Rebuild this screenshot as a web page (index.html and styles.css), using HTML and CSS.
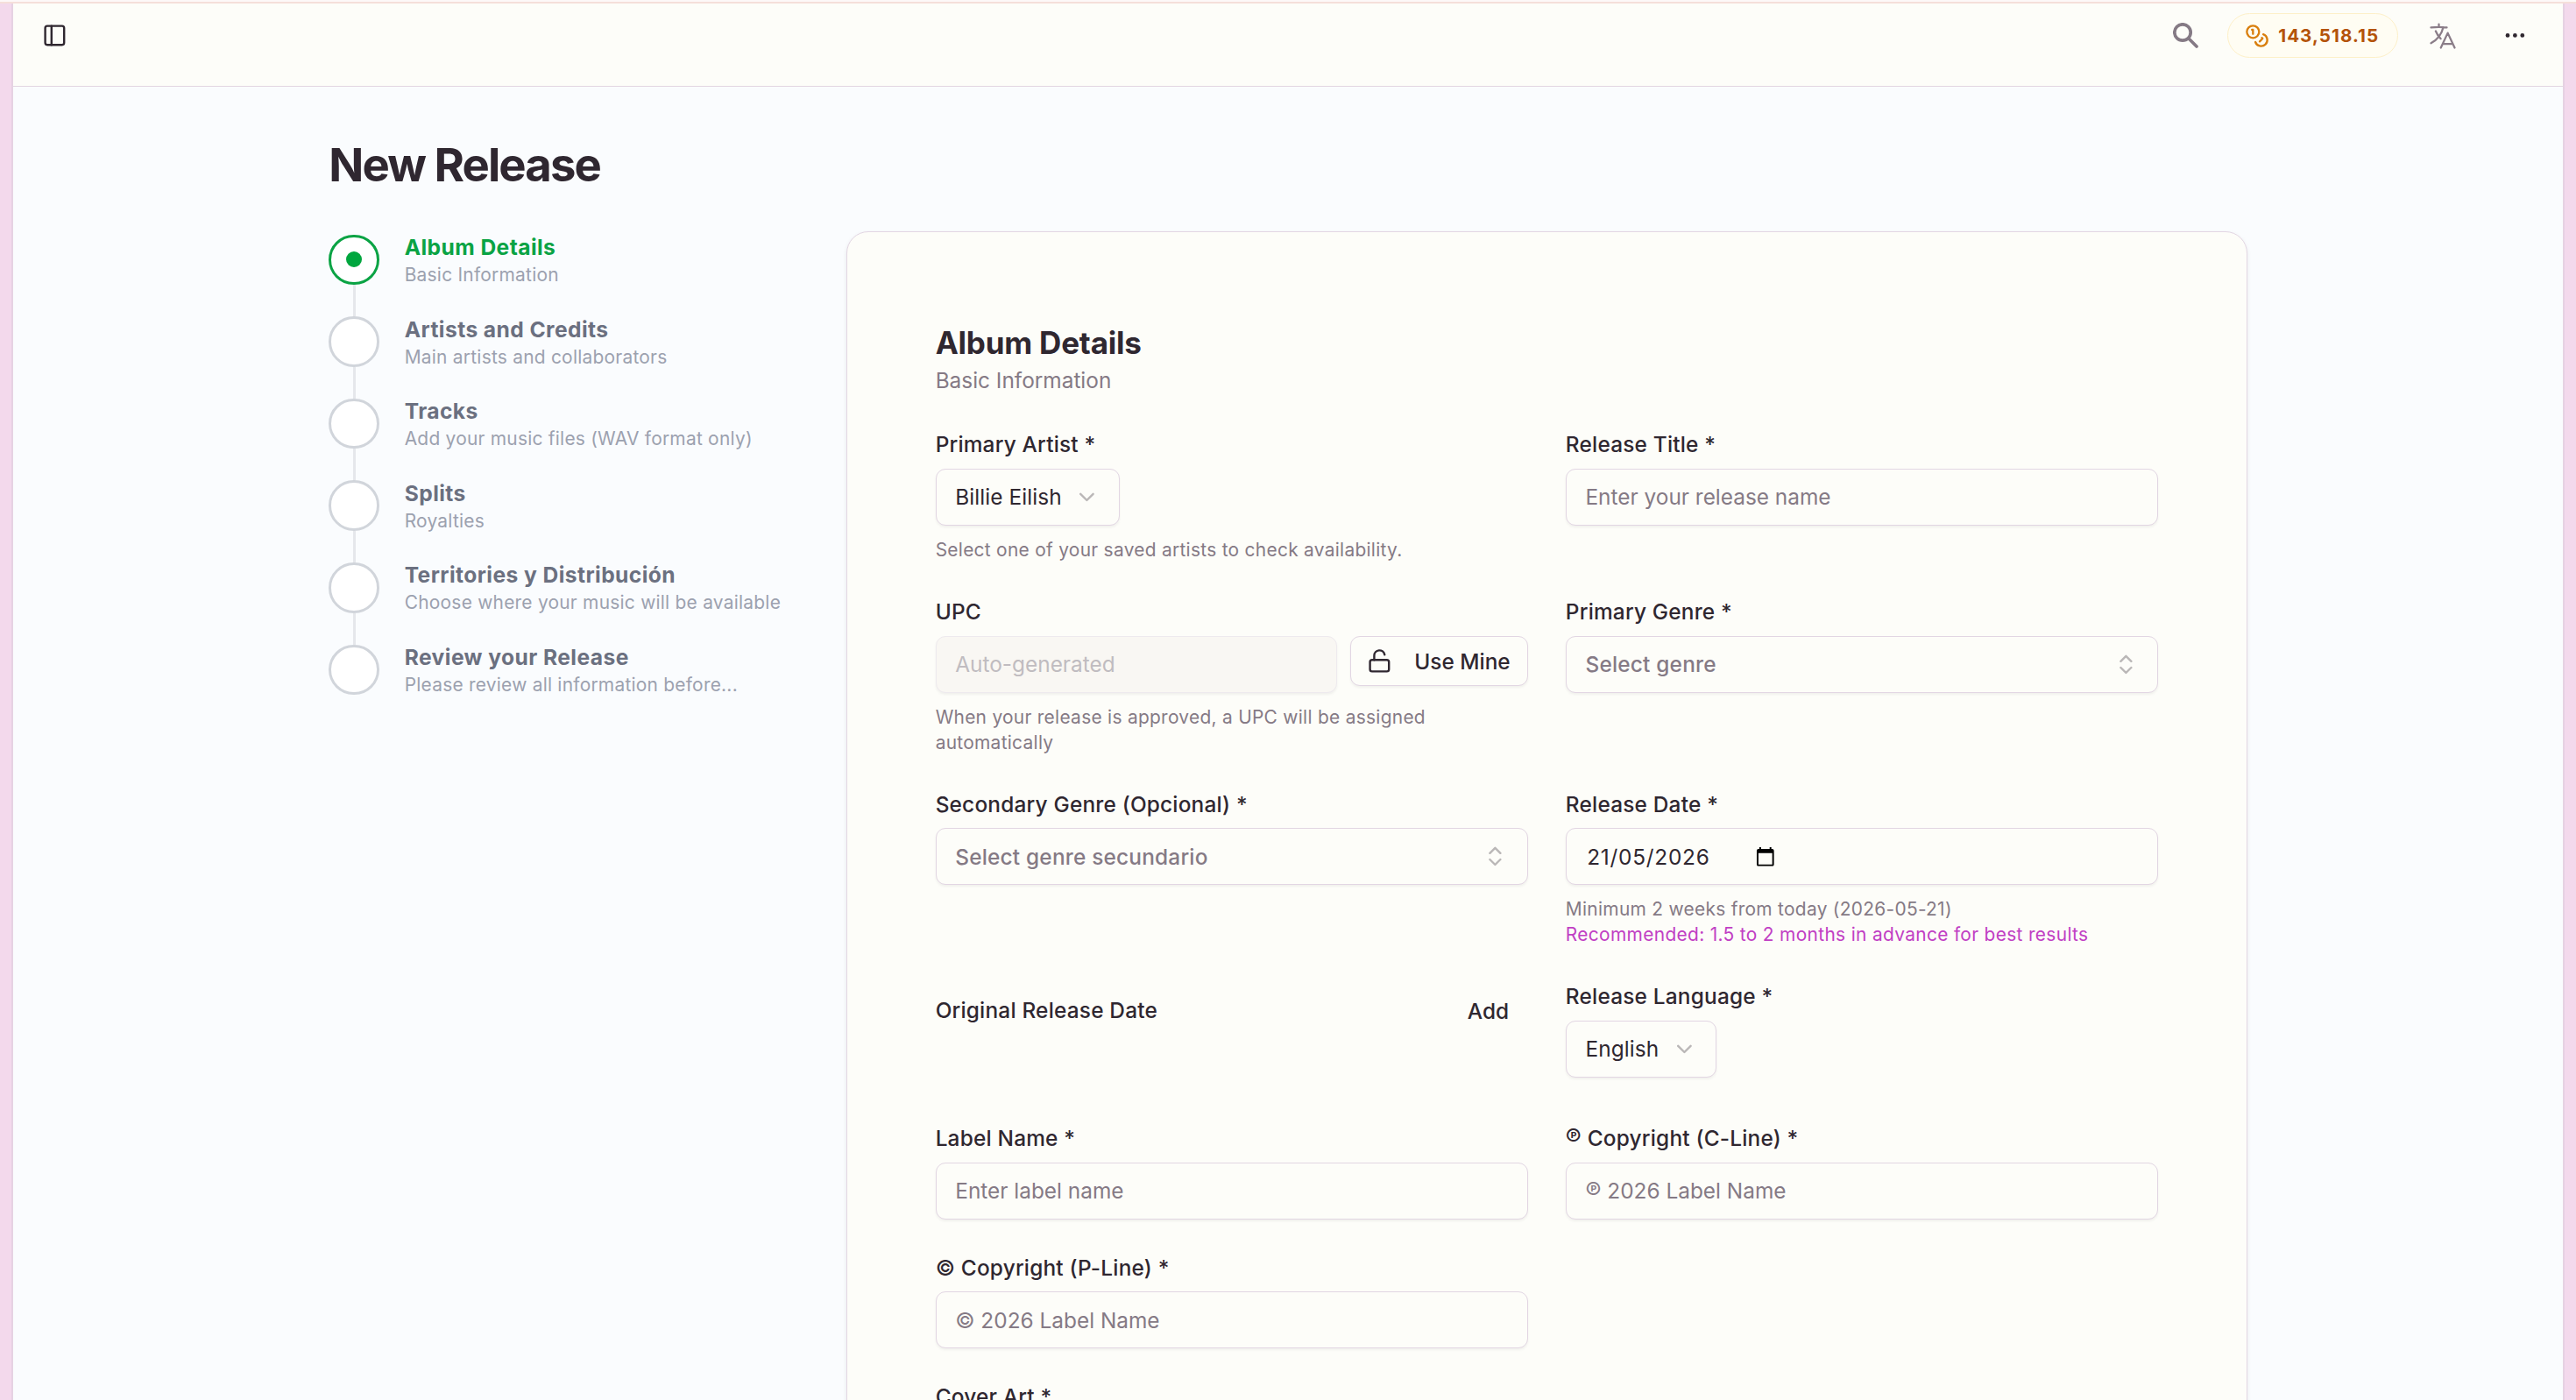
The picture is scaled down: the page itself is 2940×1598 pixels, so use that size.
FILE: index.html
```html
<!DOCTYPE html>
<html lang="en">

<head>
    <meta charset="utf-8">
    <meta name="viewport" content="width=device-width, initial-scale=1.0">
    <title>New Release</title>
    <link rel="stylesheet" href="styles.css">
</head>

<body>
    <div class="shell">
        <header class="topbar">
            <svg class="icon dark" viewBox="0 0 24 24"><rect x="3" y="3" width="18" height="18" rx="2"/><path d="M9 3v18"/></svg>
            <div class="topbar-right">
                <svg class="search" viewBox="0 0 29 29"><circle cx="11" cy="11" r="9.2"/><path d="M18 18l9 9"/></svg>
                <div class="balance">
                    <svg class="coins" viewBox="0 0 24 24"><circle cx="8" cy="8" r="6"/><path d="M18.09 10.37A6 6 0 1 1 10.34 18"/><path d="M7 6h1v4"/><path d="m16.71 13.88.7.71-2.82 2.82"/></svg>
                    <span>143,518.15</span>
                </div>
                <svg class="language" viewBox="0 0 24 24"><path d="m10.5 21 5.25-11.25L21 21m-9-3h7.5M3 5.621a48.474 48.474 0 0 1 6-.371m0 0c1.12 0 2.233.038 3.334.114M9 5.25V3m3.334 2.364C11.176 10.658 7.69 15.08 3 17.502m9.334-12.138c.896.061 1.785.147 2.666.257m-4.589 8.495a18.023 18.023 0 0 1-3.827-5.802"/></svg>
                <svg class="icon dark" viewBox="0 0 24 24"><circle cx="12" cy="12" r="1"/><circle cx="19" cy="12" r="1"/><circle cx="5" cy="12" r="1"/></svg>
            </div>
        </header>

        <main class="page">
            <h1>New Release</h1>
            <div class="columns">
                <ol class="steps">
                    <li class="step active">
                        <span class="dot"></span>
                        <div>
                            <div class="step-title">Album Details</div>
                            <div class="step-text">Basic Information</div>
                        </div>
                    </li>
                    <li class="step">
                        <span class="dot"></span>
                        <div>
                            <div class="step-title">Artists and Credits</div>
                            <div class="step-text">Main artists and collaborators</div>
                        </div>
                    </li>
                    <li class="step">
                        <span class="dot"></span>
                        <div>
                            <div class="step-title">Tracks</div>
                            <div class="step-text">Add your music files (WAV format only)</div>
                        </div>
                    </li>
                    <li class="step">
                        <span class="dot"></span>
                        <div>
                            <div class="step-title">Splits</div>
                            <div class="step-text">Royalties</div>
                        </div>
                    </li>
                    <li class="step">
                        <span class="dot"></span>
                        <div>
                            <div class="step-title">Territories y Distribución</div>
                            <div class="step-text">Choose where your music will be available</div>
                        </div>
                    </li>
                    <li class="step">
                        <span class="dot"></span>
                        <div>
                            <div class="step-title">Review your Release</div>
                            <div class="step-text">Please review all information before...</div>
                        </div>
                    </li>
                </ol>

                <section class="card">
                    <h2>Album Details</h2>
                    <p class="subtitle">Basic Information</p>

                    <form class="fields">
                        <div class="field">
                            <label>Primary Artist *</label>
                            <div class="control select">
                                <span>Billie Eilish</span>
                                <svg class="icon faded" viewBox="0 0 24 24"><path d="m6 9 6 6 6-6"/></svg>
                            </div>
                            <p class="help">Select one of your saved artists to check availability.</p>
                        </div>
                        <div class="field">
                            <label for="title">Release Title *</label>
                            <input class="control" id="title" type="text" placeholder="Enter your release name">
                        </div>

                        <div class="field">
                            <label for="upc">UPC</label>
                            <div class="upc">
                                <input class="control" id="upc" type="text" placeholder="Auto-generated" disabled>
                                <button class="use-mine" type="button">
                                    <svg class="icon" viewBox="0 0 24 24"><rect x="3" y="11" width="18" height="11" rx="2"/><path d="M7 11V7a5 5 0 0 1 9.9-1"/></svg>
                                    <span>Use Mine</span>
                                </button>
                            </div>
                            <p class="help">When your release is approved, a UPC will be assigned automatically</p>
                        </div>
                        <div class="field">
                            <label>Primary Genre *</label>
                            <div class="control combo">
                                <span>Select genre</span>
                                <svg class="icon faded" viewBox="0 0 24 24"><path d="m7 15 5 5 5-5"/><path d="m7 9 5-5 5 5"/></svg>
                            </div>
                        </div>

                        <div class="field">
                            <label>Secondary Genre (Opcional) *</label>
                            <div class="control combo">
                                <span>Select genre secundario</span>
                                <svg class="icon faded" viewBox="0 0 24 24"><path d="m7 15 5 5 5-5"/><path d="m7 9 5-5 5 5"/></svg>
                            </div>
                        </div>
                        <div class="field">
                            <label>Release Date *</label>
                            <div class="control date">
                                <span>21/05/2026</span>
                                <svg class="calendar" viewBox="0 0 24 24"><path d="M20 3h-1V1h-2v2H7V1H5v2H4c-1.1 0-2 .9-2 2v16c0 1.1.9 2 2 2h16c1.1 0 2-.9 2-2V5c0-1.1-.9-2-2-2zm0 18H4V8h16v13z"/></svg>
                            </div>
                            <p class="help">Minimum 2 weeks from today (2026-05-21)<br><span class="tip">Recommended: 1.5 to 2 months in advance for best results</span></p>
                        </div>

                        <div class="original-date">
                            <label>Original Release Date</label>
                            <button class="add" type="button">Add</button>
                        </div>
                        <div class="field language-field">
                            <label>Release Language *</label>
                            <div class="control select">
                                <span>English</span>
                                <svg class="icon faded" viewBox="0 0 24 24"><path d="m6 9 6 6 6-6"/></svg>
                            </div>
                        </div>

                        <div class="field">
                            <label for="label">Label Name *</label>
                            <input class="control" id="label" type="text" placeholder="Enter label name">
                        </div>
                        <div class="field">
                            <label><span class="phono">℗</span> Copyright (C-Line) *</label>
                            <div class="control hint"><span class="phono">℗</span>&nbsp;2026 Label Name</div>
                        </div>

                        <div class="field">
                            <label for="pline">© Copyright (P-Line) *</label>
                            <input class="control" id="pline" type="text" placeholder="© 2026 Label Name">
                        </div>
                        <div class="field"></div>

                        <div class="field">
                            <label>Cover Art *</label>
                        </div>
                    </form>
                </section>
            </div>
        </main>
    </div>
</body>

</html>
```

FILE: styles.css
```css
* {
    box-sizing: border-box;
    margin: 0;
    padding: 0;
}

html {
    font-size: 28.8px;
    font-family: Inter, "Liberation Sans", sans-serif;
    color: #2f2730;
}

body {
    height: 100vh;
    overflow: hidden;
    background: #f3d9ec;
    border-top: 2px solid #fdf8f8;
}

input,
button {
    font-family: inherit;
    color: inherit;
}

.shell {
    height: 100%;
    overflow: hidden;
    border-top: 2px solid #f5dfda;
    padding: 0 13px;
    background: #f3d9ec;
}

.topbar,
.page {
    border-left: 2px solid #e6d2e3;
    border-right: 2px solid #e6d2e3;
}

.topbar {
    height: 95px;
    display: flex;
    align-items: center;
    justify-content: space-between;
    padding: 0 40px 21px 33px;
    background: #fdfdf9;
    border-bottom: 1px solid #e3d5e1;
}

.topbar-right {
    display: flex;
    align-items: center;
}

.icon {
    width: 1rem;
    height: 1rem;
    flex: none;
    fill: none;
    stroke: currentColor;
    stroke-width: 2;
    stroke-linecap: round;
    stroke-linejoin: round;
}

.faded {
    opacity: .32;
}

.search {
    width: 29px;
    height: 29px;
    margin-right: 33px;
    fill: none;
    stroke: #857a85;
    stroke-width: 3.7;
    stroke-linecap: round;
}

.balance {
    width: 195px;
    height: 51px;
    display: flex;
    align-items: center;
    padding-left: 19px;
    margin-right: 33px;
    border: 1px solid #fdf0c8;
    border-radius: 26px;
    background: #fffdf3;
    color: #b45309;
    font-size: 20.6px;
    font-weight: 700;
    letter-spacing: 1.05px;
}

.coins {
    width: 28px;
    height: 28px;
    margin-right: 10px;
    fill: none;
    stroke: #d97f0e;
    stroke-width: 2;
    stroke-linecap: round;
    stroke-linejoin: round;
}

.language {
    width: 36px;
    height: 36px;
    margin-right: 50px;
    fill: none;
    stroke: #8a7d88;
    stroke-width: 1.5;
    stroke-linecap: round;
    stroke-linejoin: round;
}

.page {
    height: 1499px;
    padding: 57px 360.3px 0;
    background: #fafcfe;
}

h1 {
    font-size: 52.6px;
    line-height: 64.8px;
    letter-spacing: -1.9px;
    font-weight: 700;
    margin-bottom: 1.5rem;
}

.columns {
    display: flex;
    gap: 1.5rem;
}

/* steps */

.steps {
    width: 25%;
    flex: none;
    display: flex;
    flex-direction: column;
    gap: 1rem;
    list-style: none;
}

.step {
    position: relative;
    height: 64.8px;
    display: flex;
    align-items: center;
    gap: 1rem;
    color: #6b7080;
}

.dot {
    width: 2rem;
    height: 2rem;
    flex: none;
    display: flex;
    align-items: center;
    justify-content: center;
    border: 3px solid #d1d5db;
    border-radius: 50%;
    background: #fff;
}

/* line down to the next step */
.step:not(:last-child)::after {
    content: "";
    position: absolute;
    left: 27.3px;
    top: 61.2px;
    width: 3px;
    height: 36px;
    background: #e5e7eb;
}

.active .dot {
    border-color: #0aa344;
}

.active .dot::before {
    content: "";
    width: 18px;
    height: 18px;
    border-radius: 50%;
    background: #00a63e;
}

.step-title {
    font-size: 24.6px;
    line-height: 36px;
    font-weight: 650;
    letter-spacing: .43px;
}

.active .step-title {
    color: #0aa344;
}

.step-text {
    font-size: 20.9px;
    line-height: 28.8px;
    letter-spacing: .25px;
    color: #9ca1af;
    white-space: nowrap;
}

/* card */

.card {
    flex: 1;
    height: 1600px;
    padding: 3.5rem;
    border: 1px solid #e2d6e3;
    border-radius: 25px;
    background: #fdfdf9;
    box-shadow: 0 2px 5px rgba(0, 0, 0, .08);
}

h2 {
    font-size: 35px;
    line-height: 50.4px;
    font-weight: 650;
    letter-spacing: -.2px;
}

.subtitle {
    font-size: 24.4px;
    line-height: 36px;
    color: #857a85;
    margin-bottom: 1.5rem;
}

.fields {
    display: grid;
    grid-template-columns: 1fr 1fr;
    gap: 1.5rem;
}

.field {
    display: flex;
    flex-direction: column;
    align-items: flex-start;
    gap: .5rem;
}

.language-field {
    padding-bottom: .5rem;
}

label {
    height: 25.2px;
    font-size: 24.4px;
    line-height: 25.2px;
    font-weight: 500;
    letter-spacing: .2px;
}

.control {
    width: 100%;
    height: 64.8px;
    display: flex;
    align-items: center;
    padding: 0 21.6px;
    font-size: 24.4px;
    border: 1px solid #e2d6e3;
    border-radius: 11px;
    background: #fdfdf9;
    box-shadow: 0 2px 3px rgba(0, 0, 0, .05);
}

.control::placeholder {
    color: #857a85;
    opacity: 1;
}

.select {
    width: auto;
    gap: .5rem;
    letter-spacing: .1px;
}

.combo {
    justify-content: space-between;
    color: #857a85;
    font-weight: 500;
    letter-spacing: .2px;
}

.combo .icon {
    color: #2f2730;
}

.hint {
    color: #857a85;
}

.phono {
    font-size: 1.1em;
    line-height: 20px;
}

.upc {
    width: 100%;
    display: flex;
    align-items: flex-start;
    gap: .5rem;
}

.upc .control {
    flex: 1;
    min-width: 0;
}

.control:disabled {
    background: #f9f7f3;
    border-color: #eeeaee;
}

.control:disabled::placeholder {
    color: #c0bcc0;
}

.use-mine {
    width: 203px;
    height: 2rem;
    display: flex;
    align-items: center;
    justify-content: space-between;
    padding: 0 19px 0 18px;
    font-size: 24.4px;
    font-weight: 500;
    border: 1px solid #e2d6e3;
    border-radius: 11px;
    background: #fdfdf9;
    box-shadow: 0 2px 3px rgba(0, 0, 0, .05);
}

.date {
    padding-left: 23.4px;
    letter-spacing: .75px;
}

.calendar {
    width: 23.6px;
    height: 23.6px;
    margin-left: 51px;
    fill: #000;
}

.help {
    font-size: 20.9px;
    line-height: 28.8px;
    letter-spacing: .29px;
    color: #857a85;
}

.tip {
    color: #c13fc4;
    letter-spacing: .33px;
}

.original-date {
    height: 2rem;
    display: flex;
    align-items: center;
    justify-content: space-between;
}

.add {
    padding: 0 21.6px;
    font-size: 24.4px;
    font-weight: 500;
    border: none;
    background: none;
}
```
